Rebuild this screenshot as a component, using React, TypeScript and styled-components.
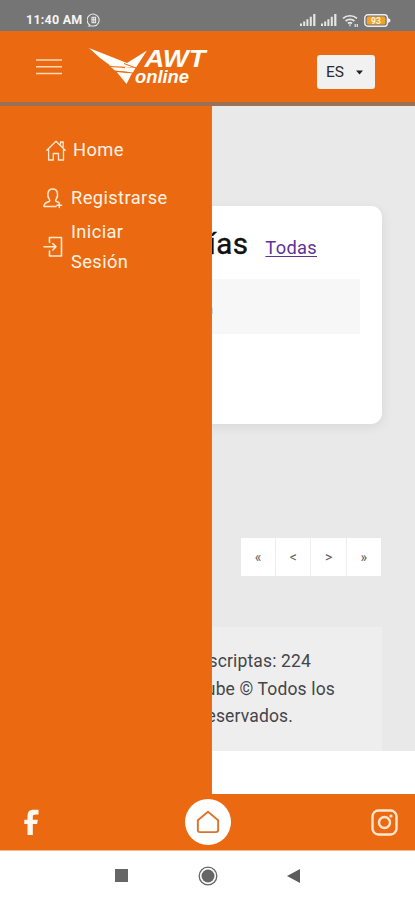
import React from "react";
import styled, { createGlobalStyle } from "styled-components";

const Global = createGlobalStyle`
  * { box-sizing: border-box; }
  body { margin: 0; background: #fff; font-family: Roboto, sans-serif; overflow: hidden; }
`;

const Screen = styled.div`
  width: 415px;
  height: 900px;
  display: flex;
  flex-direction: column;
  overflow: hidden;
`;
const StatusBar = styled.div`
  height: 31px;
  flex: none;
  background: #757575;
  color: #f4f4f4;
  display: flex;
  align-items: center;
  padding: 9px 24px 0 26px;
`;
const Clock = styled.span`
  font-size: 12.5px;
  font-weight: 700;
  line-height: 14px;
  letter-spacing: 0.22px;
  margin-right: 5px;
`;
const StatusIcons = styled.div`
  margin-left: auto;
  display: flex;
  align-items: center;
  gap: 5px;
`;
const Header = styled.header`
  height: 75px;
  flex: none;
  background: #eb6a11;
  border-bottom: 4px solid #9a7153;
  display: flex;
  align-items: flex-start;
  padding: 0 40px 0 36px;
`;
const MenuButton = styled.button`
  all: unset;
  width: 26px;
  height: 17px;
  margin-top: 27px;
  display: flex;
`;
const Logo = styled.div`
  margin: 15px 0 0 26px;
  display: flex;
`;
const LangSelect = styled.button`
  all: unset;
  box-sizing: border-box;
  margin: 24px 0 0 auto;
  width: 58px;
  height: 34px;
  border-radius: 3px;
  background: #f1f1f1;
  color: #2b2b2b;
  font-size: 15.5px;
  display: flex;
  align-items: center;
  justify-content: space-between;
  padding: 0 12px 0 9px;
`;
const Body = styled.div`
  position: relative;
  height: 688px;
  flex: none;
`;
const Drawer = styled.nav`
  position: absolute;
  inset: 0 auto 0 0;
  width: 212px;
  background: #eb6a11;
  border-right: 1px solid #e2722a;
  padding: 29px 0 0 43px;
`;
const DrawerItem = styled.a<{ $h: number; $indent?: number; $gap: number }>`
  display: flex;
  align-items: center;
  height: ${(p) => p.$h}px;
  padding-left: ${(p) => p.$indent ?? 0}px;
  gap: ${(p) => p.$gap}px;
  color: #fff3e6;
  font-size: 18.3px;
  line-height: 30px;
  letter-spacing: 0.4px;
`;
const ItemLabel = styled.span<{ $w?: number }>`
  width: ${(p) => (p.$w ? p.$w + "px" : "auto")};
`;
const Page = styled.main`
  height: 645px;
  background: #e9e9e9;
  padding: 100px 33px 0 32px;
  display: flex;
  flex-direction: column;
`;
const Card = styled.section`
  height: 218px;
  flex: none;
  border-radius: 11px;
  background: #fff;
  box-shadow: 1px 3px 12px rgba(0, 0, 0, 0.07);
  padding: 17px 22px 0;
`;
const CardHead = styled.div`
  height: 56px;
  display: flex;
  align-items: baseline;
  justify-content: flex-end;
  padding-right: 43px;
  gap: 17px;
`;
const Title = styled.h2`
  margin: 0;
  font-size: 29.5px;
  line-height: 42px;
  font-weight: 400;
  letter-spacing: 0.4px;
  color: #111;
  -webkit-text-stroke: 0.4px #111;
`;
const AllLink = styled.a`
  font-size: 18.3px;
  letter-spacing: 0.3px;
  color: #5f3296;
  text-decoration: underline;
  text-underline-offset: 2px;
`;
const Row = styled.div`
  height: 55px;
  background: #f7f7f7;
  display: flex;
  align-items: center;
  padding: 4px 0 0 99px;
  color: #aaa;
  font-size: 14px;
`;
const Pagination = styled.div`
  margin: 114px 1px 0 auto;
  height: 38px;
  display: flex;
  gap: 1px;
  background: #ededed;
`;
const PageButton = styled.button`
  all: unset;
  width: 34.3px;
  height: 38px;
  background: #fff;
  color: #606060;
  font-size: 14px;
  text-align: center;
`;
const Footer = styled.footer`
  margin-top: 51px;
  height: 124px;
  background: #eee;
  padding-top: 21px;
  color: #454549;
  font-size: 17.5px;
  line-height: 27.5px;
  letter-spacing: 0.15px;
`;
const FooterLine = styled.div<{ $w: number }>`
  width: ${(p) => p.$w}px;
  margin: 0 auto;
  display: flex;
  justify-content: flex-end;
  white-space: nowrap;
`;
const BottomBar = styled.div`
  height: 57px;
  flex: none;
  background: #eb6a11;
  border-bottom: 1px solid #f7b98d;
  display: flex;
  align-items: center;
  justify-content: space-between;
  padding: 0 17px 0 23px;
`;
const HomeCircle = styled.div`
  width: 46px;
  height: 46px;
  margin-left: 4px;
  border-radius: 50%;
  background: #fff;
  display: flex;
  align-items: center;
  justify-content: center;
`;
const SystemNav = styled.div`
  height: 49px;
  flex: none;
  background: #fff;
  display: flex;
  align-items: center;
  justify-content: space-between;
  padding: 0 115px;
`;

const Signal = () => (
  <svg width="16" height="12" viewBox="0 0 16 12" fill="#e6e6e6">
    <path d="M0 9.5h2V12H0zM3.2 7.5h2V12h-2zM6.4 5.3h2V12h-2zM9.8 2.8h2V12h-2zM13.2 0h2.2v12h-2.2z" />
  </svg>
);

const line = { fill: "none", stroke: "#ffe9d4", strokeWidth: 1.3, strokeLinejoin: "round", strokeLinecap: "round" } as const;

export default function App() {
  return (
    <>
      <Global />
      <Screen>
        <StatusBar>
          <Clock>11:40 AM</Clock>
          <svg width="14" height="14" viewBox="0 0 14 14" fill="none" stroke="#e8e8e8" strokeWidth="1.1">
            <path d="M3 12.2A6 6 0 1 1 7 13H1.8l1.4-1.4" />
            <path d="M5 4.2h3.6v5.5H5zM5 6.8h3.6M6.8 4.2v5.5" />
          </svg>
          <StatusIcons>
            <Signal />
            <Signal />
            <svg width="17" height="13" viewBox="0 0 17 13" fill="none" stroke="#e8e8e8" strokeWidth="1.7">
              <path d="M1 4.4a10.5 10.5 0 0 1 14 0M3.6 7a6.6 6.6 0 0 1 8.8 0M6 9.5a3 3 0 0 1 4 0" />
              <path d="M8 10.2v2M13.2 10v3M15.3 10v3" strokeWidth="1.2" />
            </svg>
            <svg width="27" height="13" viewBox="0 0 27 13">
              <rect x=".8" y=".8" width="22.6" height="11.4" rx="3" fill="none" stroke="#eee" strokeWidth="1.4" />
              <rect x="2.8" y="2.6" width="18.6" height="7.8" rx="1.5" fill="#efa12b" />
              <path d="M24 4l2.3 1.3v2.4L24 9z" fill="#eee" />
              <text x="12" y="9.6" textAnchor="middle" fontFamily="Roboto" fontWeight="700" fontSize="8.5" fill="#fff3da">93</text>
            </svg>
          </StatusIcons>
        </StatusBar>
        <Header>
          <MenuButton aria-label="Menu">
            <svg width="26" height="17" viewBox="0 0 26 17" stroke="#ffd9b8" strokeWidth="1.5">
              <path d="M0 2h26M0 8.7h26M0 15.4h26" />
            </svg>
          </MenuButton>
          <Logo>
            <svg width="122" height="42" viewBox="0 0 122 42" fill="#fffdf8">
              <path d="M1 2L39 17 59 4.5 48 21.5 23 20Q11 12 1 2Z" />
              <path d="M21 19.5L47.5 22 45 26.5 27 24.5Z" />
              <path d="M28.5 25.8L44 27.2 38.5 38Z" />
              <path d="M36 17.5L48 22M22 20.5L37 21.5M28 25.4L42 26.6" fill="none" stroke="#eb6a11" strokeWidth="1" />
              <g fontFamily="Liberation Sans" fontWeight="700" fontStyle="italic">
                <text x="56.5" y="21" fontSize="24" textLength="61" lengthAdjust="spacingAndGlyphs">AWT</text>
                <text x="47" y="36.5" fontSize="17.5" textLength="54" lengthAdjust="spacingAndGlyphs">online</text>
              </g>
            </svg>
          </Logo>
          <LangSelect>
            <span>ES</span>
            <svg width="7" height="5" viewBox="0 0 7 5"><path d="M0 .5h7L3.5 4.5z" fill="#222" /></svg>
          </LangSelect>
        </Header>
        <Body>
          <Page>
            <Card>
              <CardHead>
                <Title>Categorías</Title>
                <AllLink>Todas</AllLink>
              </CardHead>
              <Row>Categoría</Row>
            </Card>
            <Pagination>
              {["«", "<", ">", "»"].map((s) => (
                <PageButton key={s}>{s}</PageButton>
              ))}
            </Pagination>
            <Footer>
              <FooterLine $w={208}>Empresas inscriptas: 224</FooterLine>
              <FooterLine $w={256}>Diseño por Qube © Todos los</FooterLine>
              <FooterLine $w={172}>derechos reservados.</FooterLine>
            </Footer>
          </Page>
          <Drawer>
            <DrawerItem $h={30} $indent={3} $gap={7}>
              <svg width="20" height="21" viewBox="0 0 20 21" {...line}>
                <path d="M2.6 9.5L.8 10.3 10 1.2l9.2 9.1-1.7-.8M2.6 9.5V20h4.7v-6.5h5.2V20h5V9.5M14.5 4V2h2.7v4.5" />
              </svg>
              <ItemLabel>Home</ItemLabel>
            </DrawerItem>
            <DrawerItem $h={66} $gap={8}>
              <svg width="20" height="21" viewBox="0 0 20 21" {...line} strokeWidth={1.5}>
                <path d="M13 18.5H1c0-3.2 1.8-4 4.5-4.7 1.6-.4 1.6-1.6.7-2.7C4.8 9.4 4.7 7 4.9 5.5 5.2 2.6 7 1 9.7 1s4.5 1.6 4.800 4.5c.2 1.5.1 3.9-1.3 5.6-.9 1.1-.9 2.3.7 2.7l1.6.5M16.300 15v4.5M14 17.300h4.500" />
              </svg>
              <ItemLabel>Registrarse</ItemLabel>
            </DrawerItem>
            <DrawerItem $h={32} $gap={8}>
              <svg width="20" height="22" viewBox="0 0 20 22" {...line} strokeWidth={1.6}>
                <path d="M6.500 6.500V1.500h12v18.500h-12v-5M1 10.800h12M9.800 7.600L13 10.800l-3.200 3.200" />
              </svg>
              <ItemLabel $w={65}>Iniciar Sesión</ItemLabel>
            </DrawerItem>
          </Drawer>
        </Body>
        <BottomBar>
          <svg width="17" height="27" viewBox="0 0 17 27" fill="#fff8f0">
            <path d="M4.500 26V15H1.300v-4.200H4.500V7.300C4.500 2.800 6.500.8 10.500.8H15.500v4.700h-2.500c-2.300 0-3.200.7-3.200 2.500v2.800h5l-.7 4.200H9.800v11z" />
          </svg>
          <HomeCircle>
            <svg width="24" height="24" viewBox="0 0 26 26" fill="none" stroke="#d9742f" strokeWidth="2.1" strokeLinejoin="round">
              <path d="M13 2L24 11v10.500q0 2.500-2.500 2.500h-17Q2 24 2 21.500V11z" />
            </svg>
          </HomeCircle>
          <svg width="27" height="27" viewBox="0 0 27 27" fill="none" stroke="#ffe8cf" strokeWidth="2.4">
            <rect x="1.5" y="1.5" width="24" height="24" rx="6" />
            <circle cx="13.5" cy="13.5" r="5.5" />
            <circle cx="20" cy="7" r="1.6" fill="#ffe8cf" stroke="none" />
          </svg>
        </BottomBar>
        <SystemNav>
          <svg width="13" height="13"><rect width="13" height="13" fill="#666" /></svg>
          <svg width="20" height="20" viewBox="0 0 20 20">
            <circle cx="10" cy="10" r="8.8" fill="none" stroke="#666" strokeWidth="1.3" />
            <circle cx="10" cy="10" r="6.5" fill="#666" />
          </svg>
          <svg width="13" height="14" viewBox="0 0 13 14"><path d="M0 7L13 0v14z" fill="#5c5c5c" /></svg>
        </SystemNav>
      </Screen>
    </>
  );
}
